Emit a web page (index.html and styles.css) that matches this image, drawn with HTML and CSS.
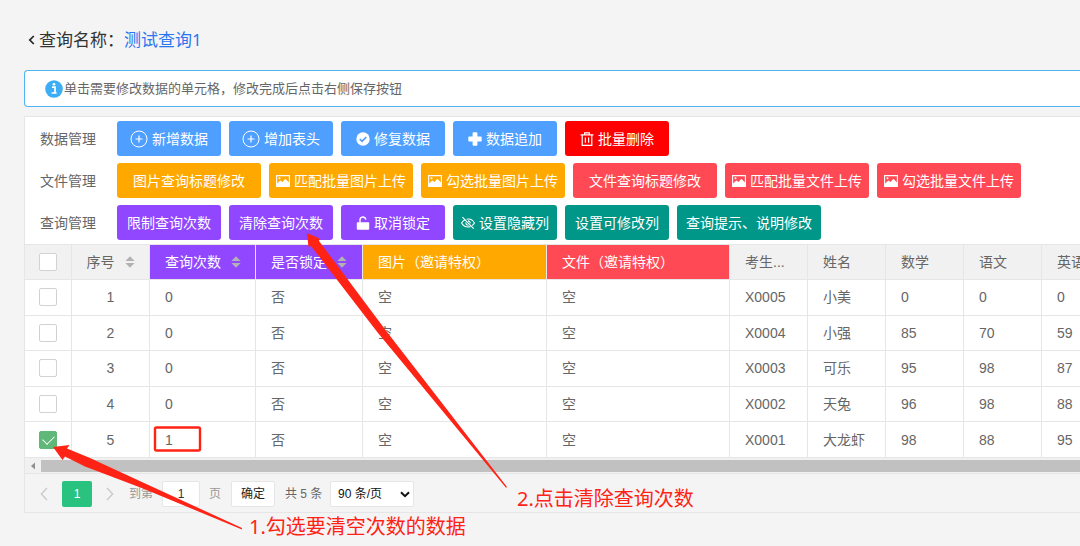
FILE: index.html
```html
<!DOCTYPE html>
<html lang="zh-CN">
<head>
<meta charset="utf-8">
<title>查询管理</title>
<link rel="stylesheet" href="styles.css">
</head>
<body>
<svg class="defs" aria-hidden="true">
  <symbol id="i-plus-circle" viewBox="0 0 18 18"><g fill="none" stroke="currentColor" stroke-width="1"><circle cx="9" cy="9" r="8"/><path d="M5.500 9h7M9 5.500v7" stroke-width="1.200"/></g></symbol>
  <symbol id="i-check-circle" viewBox="0 0 14 14"><circle cx="7" cy="7" r="6.7" fill="currentColor"/><path d="M3.8 7.2l2.3 2.2 4.2-4.4" fill="none" stroke="#4e9fff" stroke-width="1.7"/></symbol>
  <symbol id="i-plus" viewBox="0 0 14 14"><path d="M4.6 1.2q0-.9.9-.9h3q.9 0 .9.9v3.4h3.400q.9 0 .9.9v3q0 .9-.9.9H9.400v3.400q0 .9-.9.9h-3q-.9 0-.9-.9V9.400H1.200q-.9 0-.9-.9v-3q0-.9.9-.9h3.400z" fill="currentColor"/></symbol>
  <symbol id="i-trash" viewBox="0 0 14 14"><path d="M.6 2.900h12.800M4.600 2.700V.8h4.800v1.900M2.200 3v10.300h9.600V3M5.400 5.400v5.400M8.600 5.400v5.400" fill="none" stroke="currentColor" stroke-width="1.2"/></symbol>
  <symbol id="i-image" viewBox="0 0 14 12"><path d="M.6.6h12.800v10.800H.6z" fill="none" stroke="currentColor" stroke-width="1.100"/><path d="M1 8.500l3.400-3 2.100 1.500 2.800-3.300L13 7.600V11.400H1z" fill="currentColor"/><circle cx="3.500" cy="3.300" r="1" fill="currentColor"/></symbol>
  <symbol id="i-unlock" viewBox="0 0 14 14"><rect x=".8" y="6.200" width="12.400" height="7.500" rx=".8" fill="currentColor"/><path d="M4 6.400V4.200a2.900 2.900 0 0 1 5.800-.6" fill="none" stroke="currentColor" stroke-width="1.400"/></symbol>
  <symbol id="i-eye-off" viewBox="0 0 14 14"><path d="M4 3.700C2.500 4.500 1.300 5.700.6 7 2 9.600 4.400 11 7 11c.9 0 1.800-.2 2.600-.5M5.600 3.200C9 2.500 12 4.300 13.400 7c-.5 1-1.300 1.900-2.200 2.500M5 6.500a2.200 2.200 0 0 0 2.700 2.700M7 4.900a2.200 2.200 0 0 1 2.200 2.300M1.400 1.200l11.300 11.400" fill="none" stroke="currentColor" stroke-width="1.100"/></symbol>
  <symbol id="i-sort" viewBox="0 0 10 12"><path d="M5 .3L9.600 5H.4zM5 11.700L.4 7h9.200z" fill="#b2b2b2"/></symbol>
</svg>

<header class="title">
  <a class="back" href="#" aria-label="返回"><svg width="7" height="10" viewBox="0 0 7 10"><path d="M5.800 1L1.800 5l4 4" fill="none" stroke="currentColor" stroke-width="1.700"/></svg></a>
  <h1>查询名称：<a href="#">测试查询1</a></h1>
</header>

<main>
  <p class="notice">
    <svg width="18" height="18" viewBox="0 0 18 18"><circle cx="9" cy="9" r="8.800" fill="#3eaef4"/><path d="M7 7.200h3v5.200M6.600 13h5" fill="none" stroke="#fff" stroke-width="1.700"/><circle cx="9" cy="4.300" r="1.300" fill="#fff"/></svg>
    单击需要修改数据的单元格，修改完成后点击右侧保存按钮
  </p>

  <section class="panel">
    <div class="tools">
      <div class="tool-row"><span class="tool-name">数据管理</span>
        <button class="btn blue"><svg class="icon big"><use href="#i-plus-circle"/></svg>新增数据</button>
        <button class="btn blue"><svg class="icon big"><use href="#i-plus-circle"/></svg>增加表头</button>
        <button class="btn blue"><svg class="icon"><use href="#i-check-circle"/></svg>修复数据</button>
        <button class="btn blue"><svg class="icon"><use href="#i-plus"/></svg>数据追加</button>
        <button class="btn red"><svg class="icon"><use href="#i-trash"/></svg>批量删除</button>
      </div>
      <div class="tool-row"><span class="tool-name">文件管理</span>
        <button class="btn wide orange">图片查询标题修改</button>
        <button class="btn wide orange"><svg class="icon"><use href="#i-image"/></svg>匹配批量图片上传</button>
        <button class="btn wide orange"><svg class="icon"><use href="#i-image"/></svg>勾选批量图片上传</button>
        <button class="btn wide coral">文件查询标题修改</button>
        <button class="btn wide coral"><svg class="icon"><use href="#i-image"/></svg>匹配批量文件上传</button>
        <button class="btn wide coral"><svg class="icon"><use href="#i-image"/></svg>勾选批量文件上传</button>
      </div>
      <div class="tool-row"><span class="tool-name">查询管理</span>
        <button class="btn purple">限制查询次数</button>
        <button class="btn purple">清除查询次数</button>
        <button class="btn purple"><svg class="icon"><use href="#i-unlock"/></svg>取消锁定</button>
        <button class="btn teal"><svg class="icon"><use href="#i-eye-off"/></svg>设置隐藏列</button>
        <button class="btn teal">设置可修改列</button>
        <button class="btn wide teal">查询提示、说明修改</button>
      </div>
    </div>

    <div class="table-wrap">
      <table>
        <colgroup><col class="c-check"><col class="c-score"><col class="c-count"><col class="c-lock"><col class="c-pic"><col class="c-file"><col class="c-score"><col class="c-score"><col class="c-score"><col class="c-score"><col class="c-score"></colgroup>
        <thead>
          <tr>
            <th class="center"><input type="checkbox" aria-label="全选"></th>
            <th class="center">序号<svg class="sort"><use href="#i-sort"/></svg></th>
            <th class="purple">查询次数<svg class="sort"><use href="#i-sort"/></svg></th>
            <th class="purple">是否锁定<svg class="sort"><use href="#i-sort"/></svg></th>
            <th class="orange">图片（邀请特权）</th>
            <th class="coral">文件（邀请特权）</th>
            <th>考生...</th><th>姓名</th><th>数学</th><th>语文</th><th>英语</th>
          </tr>
        </thead>
        <tbody>
          <tr><td class="center"><input type="checkbox" aria-label="选择第1行"></td><td class="center">1</td><td>0</td><td>否</td><td>空</td><td>空</td><td>X0005</td><td>小美</td><td>0</td><td>0</td><td>0</td></tr>
          <tr><td class="center"><input type="checkbox" aria-label="选择第2行"></td><td class="center">2</td><td>0</td><td>否</td><td>空</td><td>空</td><td>X0004</td><td>小强</td><td>85</td><td>70</td><td>59</td></tr>
          <tr><td class="center"><input type="checkbox" aria-label="选择第3行"></td><td class="center">3</td><td>0</td><td>否</td><td>空</td><td>空</td><td>X0003</td><td>可乐</td><td>95</td><td>98</td><td>87</td></tr>
          <tr><td class="center"><input type="checkbox" aria-label="选择第4行"></td><td class="center">4</td><td>0</td><td>否</td><td>空</td><td>空</td><td>X0002</td><td>天兔</td><td>96</td><td>98</td><td>88</td></tr>
          <tr><td class="center"><input type="checkbox" aria-label="选择第5行" checked></td><td class="center">5</td><td>1</td><td>否</td><td>空</td><td>空</td><td>X0001</td><td>大龙虾</td><td>98</td><td>88</td><td>95</td></tr>
        </tbody>
      </table>
    </div>
    <div class="scrollbar"><svg width="16" height="12" viewBox="0 0 16 12"><path d="M10 2.500v7L6 6z" fill="#8f8f8f"/></svg><div class="thumb"></div></div>

    <nav class="pager" aria-label="分页">
      <button class="arrow" aria-label="上一页"><svg width="8" height="14" viewBox="0 0 8 14"><path d="M7 1L1.300 7 7 13" fill="none" stroke="currentColor" stroke-width="1.300"/></svg></button>
      <button class="current">1</button>
      <button class="arrow" aria-label="下一页"><svg width="8" height="14" viewBox="0 0 8 14"><path d="M1 1l5.700 6L1 13" fill="none" stroke="currentColor" stroke-width="1.300"/></svg></button>
      <label class="jump">到第<input type="text" value="1">页</label>
      <button class="confirm">确定</button>
      <span class="total">共 5 条</span>
      <span class="select-box"><select aria-label="每页条数"><option>90 条/页</option></select><svg width="10" height="7" viewBox="0 0 10 7"><path d="M1 1.200l4 4 4-4" fill="none" stroke="#111" stroke-width="2"/></svg></span>
    </nav>
  </section>
</main>

<svg class="marks" width="1080" height="546" viewBox="0 0 1080 546" aria-hidden="true">
  <g fill="#ff2315">
    <path d="M53 447L69.500 445l-2.500 3.500L90 458l53 24.500L242 528v1.500L143 488.500 85 466.500 65 456.500l-2.500 3.500z"/>
    <path d="M307 233l12.500 5.500-.5 2.500L387 332 507 487l-1 .8L378 333 311 246l-2.500 1z"/>
  </g>
  <rect x="155" y="427.500" width="45" height="23" rx="1.500" fill="none" stroke="#ff2315" stroke-width="2.400"/>
</svg>
<span class="mark-text mark-one">1.勾选要清空次数的数据</span>
<span class="mark-text mark-two">2.点击清除查询次数</span>
</body>
</html>
```
FILE: styles.css
```css
* { box-sizing: border-box; }

body {
  margin: 0;
  position: relative;
  min-height: 100vh;
  overflow-x: hidden;
  background: #f4f4f4;
  color: #666;
  font: 14px/20px "Liberation Sans", "Noto Sans CJK SC", sans-serif;
}

button, input, select { font: inherit; margin: 0; }
button { cursor: pointer; }
a { text-decoration: none; }
.defs { position: absolute; width: 0; height: 0; }

.title {
  display: flex;
  align-items: center;
  gap: 4px;
  padding: 28px 0 18px 28px;
  color: #333;
}
.back { display: flex; color: #222; }
.title h1 {
  margin: 0;
  font: 17px/24px "Noto Sans", "Noto Sans CJK SC", sans-serif;
}
.title h1 a { color: #2a76f0; }

main { padding-left: 24px; }

.notice {
  display: flex;
  align-items: center;
  gap: 1px;
  margin: 0 0 9px;
  padding: 8px 20px 7px;
  border: 1px solid #4fb5f0;
  border-right: 0;
  border-radius: 4px 0 0 4px;
  background: #fff;
  font-size: 13px;
}

.panel { border: 1px solid #e6e6e6; border-right: 0; }

.tools {
  display: flex;
  flex-direction: column;
  gap: 7px;
  padding: 4px 0 4px 15px;
  background: #fff;
}
.tool-row { display: flex; align-items: center; gap: 8px; }
.tool-name { width: 69px; }

.btn {
  display: flex;
  align-items: center;
  justify-content: center;
  gap: 4px;
  min-width: 104px;
  height: 35px;
  padding: 0;
  border: 0;
  border-radius: 3px;
  color: #fff;
  white-space: nowrap;
}
.btn.wide { min-width: 144px; }
.icon { width: 14px; height: 14px; flex: none; }
.icon.big { width: 18px; height: 18px; }

.blue { background: #4e9fff; }
.red { background: #f00; }
.orange { background: #ffa800; }
.coral { background: #ff4a55; }
.purple { background: #9047ff; }
.teal { background: #009688; }

.table-wrap { overflow: hidden; background: #fff; }
table {
  width: 100%;
  height: 214px;
  table-layout: fixed;
  border-collapse: separate;
  border-spacing: 0;
}
.c-check { width: 47px; }
.c-score { width: 78px; }
.c-count { width: 106px; }
.c-lock { width: 107px; }
.c-pic { width: 184px; }
.c-file { width: 183px; }

th, td {
  padding: 0 0 0 15px;
  border-right: 1px solid #e6e6e6;
  border-bottom: 1px solid #e6e6e6;
  font-weight: 400;
  text-align: left;
  white-space: nowrap;
}
thead th { height: 36px; border-top: 1px solid #e6e6e6; }
th:not([class]), th.center { background: #f1f1f1; }
th.purple, th.orange, th.coral { color: #fff; }
th.center, td.center { padding: 0; text-align: center; }
.sort { width: 10px; height: 12px; margin-left: 10px; vertical-align: -1px; }

input[type="checkbox"] {
  appearance: none;
  display: block;
  width: 18px;
  height: 18px;
  margin: 0 auto;
  border: 1px solid #d2d2d2;
  border-radius: 2px;
  background: #fff;
}
input[type="checkbox"]:checked { border-color: #5fb878; background: #5fb878; }
input[type="checkbox"]:checked::after {
  content: "";
  display: block;
  width: 10px;
  height: 6px;
  margin: 3px auto 0;
  border: solid #fff;
  border-width: 0 0 1px 1px;
  transform: rotate(-45deg);
}

.scrollbar {
  display: flex;
  align-items: center;
  height: 16px;
  border-bottom: 1px solid #e6e6e6;
  background: #f1f1f1;
}
.thumb { flex: 1; height: 12px; background: #c1c1c1; }

.pager {
  display: flex;
  align-items: center;
  padding: 7px 0 5px 15px;
  font-size: 12px;
}
.pager button { height: 26px; padding: 0; border-radius: 2px; }
.pager .arrow {
  display: flex;
  align-items: center;
  justify-content: center;
  width: 8px;
  border: 0;
  background: none;
  color: #c8c8c8;
}
.pager .current {
  width: 30px;
  margin: 0 14px;
  border: 0;
  background: #29c27f;
  color: #fff;
}
.jump { display: flex; align-items: center; gap: 9px; margin-left: 15px; color: #999; }
.jump input {
  width: 38px;
  height: 26px;
  padding: 0;
  border: 1px solid #e6e6e6;
  border-radius: 2px;
  background: #fff;
  color: #333;
  text-align: center;
}
.pager .confirm {
  width: 44px;
  margin: 0 10px;
  border: 1px solid #e6e6e6;
  background: #fff;
  color: #222;
}
.total { width: 45px; }
.select-box { display: flex; align-items: center; }
.select-box select {
  appearance: none;
  width: 84px;
  height: 26px;
  padding: 0 7px;
  border: 1px solid #e6e6e6;
  border-radius: 2px;
  background: #fff;
  color: #111;
}
.select-box svg { margin-left: -14px; pointer-events: none; }

.marks { position: absolute; left: 0; top: 0; pointer-events: none; }
.mark-text {
  position: absolute;
  color: #ff2315;
  font: 20px/28px "Noto Sans", "Noto Sans CJK SC", sans-serif;
  white-space: nowrap;
}
.mark-one { left: 249px; top: 513px; }
.mark-two { left: 517px; top: 485px; }
```
